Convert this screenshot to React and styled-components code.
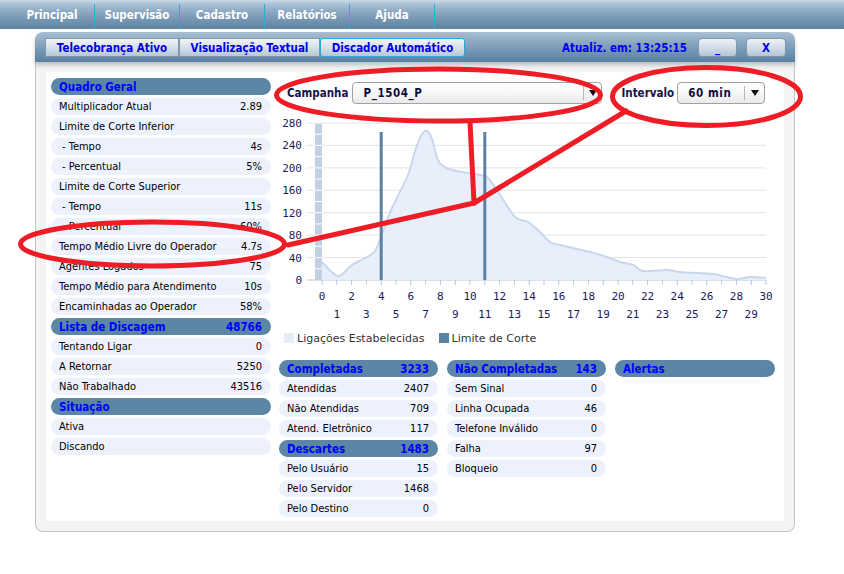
import React from "react";
import styled, { createGlobalStyle } from "styled-components";

const GlobalStyle = createGlobalStyle`
  html, body { margin: 0; padding: 0; background: #ffffff; }
  body {
    font-family: "DejaVu Sans Condensed", "Liberation Sans", sans-serif;
    font-size: 11px;
    color: #000;
  }
  #root { width: 844px; height: 574px; position: relative; overflow: hidden; }
`;

const SANS = `"DejaVu Sans Condensed", "Liberation Sans", sans-serif`;

const Page = styled.div`
  position: relative;
  width: 844px;
  height: 574px;
`;

const NavBar = styled.nav`
  display: flex;
  height: 29px;
  padding-left: 10px;
  background: linear-gradient(to bottom, #c9dae8 0%, #a9c1d5 14%, #86a5bf 45%, #6f92af 75%, #5d82a2 100%);
`;

const NavItem = styled.div`
  width: 85px;
  display: flex;
  align-items: center;
  justify-content: center;
  color: #ffffff;
  font-weight: bold;
  font-size: 11.5px;
  font-family: ${SANS};
  border-right: 1px solid #22b2d8;
  margin-top: 4px;
  padding-bottom: 4px;
  box-sizing: border-box;
`;

const Panel = styled.section`
  width: 760px;
  margin: 3px 0 0 35px;
`;

const PanelHeader = styled.header`
  position: relative;
  z-index: 1;
  height: 30px;
  box-sizing: border-box;
  display: flex;
  align-items: flex-start;
  padding: 6px 9px 0 10px;
  border-radius: 8px 8px 0 0;
  background: linear-gradient(to bottom, #a9bfd2 0%, #86a4be 40%, #6a8fad 75%, #5a80a0 100%);
  box-shadow: 0 3px 4px rgba(60, 70, 80, 0.3);
`;

const Tab = styled.div`
  height: 19px;
  box-sizing: border-box;
  padding: 0 11px;
  display: flex;
  align-items: center;
  justify-content: center;
  width: ${(p) => p.$w}px;
  border: 1px solid ${(p) => (p.$active ? "#2aa8e2" : "#8098ad")};
  background: linear-gradient(to bottom, #f0f4f7 0%, #d6e0e9 50%, #b7c7d5 100%);
  color: #0000dd;
  font-weight: bold;
  font-size: 11.5px;
  font-family: ${SANS};
  white-space: nowrap;
  border-radius: ${(p) => (p.$active ? "3px" : "0")};
`;

const Updated = styled.div`
  margin-left: auto;
  margin-right: 11px;
  height: 19px;
  display: flex;
  align-items: center;
  color: #0000ee;
  font-weight: bold;
  font-size: 11.5px;
  font-family: ${SANS};
`;

const WinButton = styled.div`
  width: ${(p) => p.$w}px;
  height: 19px;
  box-sizing: border-box;
  margin-left: ${(p) => p.$ml || 0}px;
  display: flex;
  align-items: center;
  justify-content: center;
  border-radius: 4px;
  border: 1px solid #7f98ae;
  background: linear-gradient(to bottom, #eef3f7 0%, #cfdbe6 55%, #b3c5d5 100%);
  color: #0000ee;
  font-weight: bold;
  font-size: 11.5px;
  font-family: ${SANS};
`;

const PanelBody = styled.div`
  background: #f3f3f3;
  border: 1px solid #c3c3c3;
  border-top: none;
  border-radius: 0 0 8px 8px;
  padding: 10px 10px 10px 10px;
`;

const Content = styled.div`
  background: #ffffff;
  height: 449px;
  box-sizing: border-box;
  padding: 6px 0 0 5px;
  display: flex;
  gap: 8px;
`;

const Column = styled.div`
  width: ${(p) => p.$w}px;
  display: flex;
  flex-direction: column;
  gap: 3px;
`;

const Row = styled.div`
  height: 17px;
  box-sizing: border-box;
  display: flex;
  align-items: center;
  justify-content: space-between;
  padding: 0 9px 0 ${(p) => (p.$indent ? 11 : 8)}px;
  border-radius: 9px;
  background: ${(p) => (p.$head ? "#5b86a5" : "#edf1fc")};
  color: ${(p) => (p.$head ? "#0000ff" : "#000000")};
  font-weight: ${(p) => (p.$head ? "bold" : "normal")};
  font-size: ${(p) => (p.$head ? "11.5px" : "11px")};
  font-family: ${SANS};
  white-space: nowrap;
`;

const RightArea = styled.div`
  width: 496px;
  padding-top: 4px;
  display: flex;
  flex-direction: column;
`;

const Controls = styled.div`
  display: flex;
  align-items: center;
  height: 22px;
  padding-left: 8px;
`;

const Label = styled.span`
  color: #14144a;
  font-weight: bold;
  font-size: 11.5px;
  font-family: ${SANS};
  margin-right: ${(p) => p.$mr}px;
  margin-left: ${(p) => p.$ml || 0}px;
`;

const Select = styled.div`
  width: ${(p) => p.$w}px;
  height: 22px;
  box-sizing: border-box;
  display: flex;
  align-items: stretch;
  border: 1px solid #a2a2a2;
  border-radius: 4px;
  background: linear-gradient(to bottom, #ffffff 0%, #f7f7f7 50%, #e9e9e9 100%);
`;

const SelectValue = styled.div`
  flex: 1;
  display: flex;
  align-items: center;
  padding-left: 10px;
  color: #0d0d3a;
  font-weight: bold;
  font-size: 11.5px;
  letter-spacing: 0.6px;
  font-family: ${SANS};
`;

const SelectArrow = styled.div`
  width: ${(p) => p.$w}px;
  display: flex;
  align-items: center;
  justify-content: center;
  border-left: 1px solid #b8b8b8;
  margin: 3px 0;
`;

const ChartSvg = styled.svg`
  display: block;
  width: 496px;
  height: 220px;
`;

const Legend = styled.div`
  display: flex;
  align-items: center;
  height: 14px;
  margin-top: 7px;
  padding-left: 5px;
  font-family: "DejaVu Sans", "Liberation Sans", sans-serif;
  font-size: 11px;
  color: #333333;
`;

const LegendSwatch = styled.span`
  width: 10px;
  height: 10px;
  background: ${(p) => p.$c};
  margin-right: 3px;
  margin-left: ${(p) => p.$ml || 0}px;
`;

const Grid = styled.div`
  display: flex;
  gap: 9px;
  margin-top: 15px;
`;

const Overlay = styled.svg`
  position: absolute;
  left: 0;
  top: 0;
  width: 844px;
  height: 574px;
  pointer-events: none;
  z-index: 10;
`;

function smoothPath(pts) {
  let d = `M${pts[0][0]},${pts[0][1]}`;
  for (let i = 0; i < pts.length - 1; i++) {
    const p0 = pts[i - 1] || pts[i];
    const p1 = pts[i];
    const p2 = pts[i + 1];
    const p3 = pts[i + 2] || p2;
    const c1x = p1[0] + (p2[0] - p0[0]) / 6;
    const c1y = p1[1] + (p2[1] - p0[1]) / 6;
    const c2x = p2[0] - (p3[0] - p1[0]) / 6;
    const c2y = p2[1] - (p3[1] - p1[1]) / 6;
    d += ` C${c1x.toFixed(1)},${c1y.toFixed(1)} ${c2x.toFixed(1)},${c2y.toFixed(1)} ${p2[0]},${p2[1]}`;
  }
  return d;
}

const OX = 279;
const OY = 104;
const X = (u) => 43 + 14.8 * u;
const Y = (v) => 176 - 0.5607 * v;

const pagePts = [
  [322, 262], [338, 276], [352, 265], [365, 258], [375, 251], [382, 234], [392, 208],
  [408, 175], [415, 151], [422, 134], [427, 131], [432, 139], [438, 160], [446, 168],
  [462, 172], [480, 175], [488, 178], [502, 198], [515, 217], [528, 222], [538, 230],
  [550, 242], [560, 245], [590, 252], [607, 257], [620, 262], [633, 265], [643, 271],
  [667, 270], [680, 272], [713, 274], [722, 276], [737, 279], [750, 277], [766, 278],
];
const pts = pagePts.map(([x, y]) => [x - OX, y - OY]);
const linePath = smoothPath(pts);
const areaPath = `${linePath} L${pts[pts.length - 1][0]},176 L${pts[0][0]},176 Z`;

const MONO = `"DejaVu Sans Mono", "Liberation Mono", monospace`;

function Chart() {
  const yVals = [0, 40, 80, 120, 160, 200, 240, 280];
  const units = Array.from({ length: 31 }, (_, i) => i);
  const barDividers = Array.from({ length: 14 }, (_, i) => Y(20 * (i + 1)));
  return (
    <ChartSvg viewBox="0 0 496 220">
      {yVals.map((v) => (
        <g key={v}>
          <line x1="28" x2="487" y1={Y(v)} y2={Y(v)} stroke={v === 0 ? "#b5c6da" : "#e4e4e4"} strokeWidth="1" />
          <text x="23" y={Y(v) + 4} textAnchor="end" fontFamily={MONO} fontSize="11" fill="#1a1a60">
            {v}
          </text>
        </g>
      ))}
      <rect x="36" y={Y(280)} width="7" height={176 - Y(280)} fill="#c2d1e1" />
      {barDividers.map((y, i) => (
        <line key={i} x1="36" x2="43" y1={y} y2={y} stroke="#ffffff" strokeWidth="1" />
      ))}
      <path d={areaPath} fill="#e9eefb" />
      <path d={linePath} fill="none" stroke="#c7d8eb" strokeWidth="2" />
      <line x1={X(4)} x2={X(4)} y1="28" y2="176" stroke="#5a81a2" strokeWidth="3" />
      <line x1={X(11)} x2={X(11)} y1="28" y2="176" stroke="#5a81a2" strokeWidth="3" />
      {units.map((u) => (
        <g key={u}>
          <line x1={X(u)} x2={X(u)} y1="176" y2="181" stroke="#b5c6da" strokeWidth="1" />
          <text
            x={X(u)}
            y={u % 2 === 0 ? 196 : 214}
            textAnchor="middle"
            fontFamily={MONO}
            fontSize="11"
            fill="#1a1a60"
          >
            {u}
          </text>
        </g>
      ))}
    </ChartSvg>
  );
}

function Arrow() {
  return (
    <svg width="8" height="6" viewBox="0 0 8 6">
      <path d="M0,0 L8,0 L4,6 Z" fill="#111" />
    </svg>
  );
}

const leftRows = [
  { head: true, l: "Quadro Geral" },
  { l: "Multiplicador Atual", v: "2.89" },
  { l: "Limite de Corte Inferior" },
  { l: "- Tempo", v: "4s", indent: true },
  { l: "- Percentual", v: "5%", indent: true },
  { l: "Limite de Corte Superior" },
  { l: "- Tempo", v: "11s", indent: true },
  { l: "- Percentual", v: "60%", indent: true },
  { l: "Tempo Médio Livre do Operador", v: "4.7s" },
  { l: "Agentes Logados", v: "75" },
  { l: "Tempo Médio para Atendimento", v: "10s" },
  { l: "Encaminhadas ao Operador", v: "58%" },
  { head: true, l: "Lista de Discagem", v: "48766" },
  { l: "Tentando Ligar", v: "0" },
  { l: "A Retornar", v: "5250" },
  { l: "Não Trabalhado", v: "43516" },
  { head: true, l: "Situação" },
  { l: "Ativa" },
  { l: "Discando" },
];

const colA = [
  { head: true, l: "Completadas", v: "3233" },
  { l: "Atendidas", v: "2407" },
  { l: "Não Atendidas", v: "709" },
  { l: "Atend. Eletrônico", v: "117" },
  { head: true, l: "Descartes", v: "1483" },
  { l: "Pelo Usuário", v: "15" },
  { l: "Pelo Servidor", v: "1468" },
  { l: "Pelo Destino", v: "0" },
];

const colB = [
  { head: true, l: "Não Completadas", v: "143" },
  { l: "Sem Sinal", v: "0" },
  { l: "Linha Ocupada", v: "46" },
  { l: "Telefone Inválido", v: "0" },
  { l: "Falha", v: "97" },
  { l: "Bloqueio", v: "0" },
];

const colC = [{ head: true, l: "Alertas" }];

function Rows({ items }) {
  return items.map((r, i) => (
    <Row key={i} $head={r.head} $indent={r.indent}>
      <span>{r.l}</span>
      {r.v !== undefined && <span>{r.v}</span>}
    </Row>
  ));
}

export default function App() {
  return (
    <Page>
      <GlobalStyle />
      <NavBar>
        {["Principal", "Supervisão", "Cadastro", "Relatórios", "Ajuda"].map((t) => (
          <NavItem key={t}>{t}</NavItem>
        ))}
      </NavBar>
      <Panel>
        <PanelHeader>
          <Tab $w={134}>Telecobrança Ativo</Tab>
          <Tab $w={141}>Visualização Textual</Tab>
          <Tab $w={145} $active>Discador Automático</Tab>
          <Updated>Atualiz. em: 13:25:15</Updated>
          <WinButton $w={39}>_</WinButton>
          <WinButton $w={40} $ml={9}>X</WinButton>
        </PanelHeader>
        <PanelBody>
          <Content>
            <Column $w={220}>
              <Rows items={leftRows} />
            </Column>
            <RightArea>
              <Controls>
                <Label $mr={4}>Campanha</Label>
                <Select $w={250}>
                  <SelectValue>P_1504_P</SelectValue>
                  <SelectArrow $w={17}><Arrow /></SelectArrow>
                </Select>
                <Label $ml={19} $mr={3}>Intervalo</Label>
                <Select $w={88}>
                  <SelectValue>60 min</SelectValue>
                  <SelectArrow $w={19}><Arrow /></SelectArrow>
                </Select>
              </Controls>
              <Chart />
              <Legend>
                <LegendSwatch $c="#e5ecfa" />
                <span>Ligações Estabelecidas</span>
                <LegendSwatch $c="#5b82a3" $ml={14} />
                <span>Limite de Corte</span>
              </Legend>
              <Grid>
                <Column $w={159}>
                  <Rows items={colA} />
                </Column>
                <Column $w={159}>
                  <Rows items={colB} />
                </Column>
                <Column $w={160}>
                  <Rows items={colC} />
                </Column>
              </Grid>
            </RightArea>
          </Content>
        </PanelBody>
      </Panel>
      <Overlay viewBox="0 0 844 574">
        <g fill="none" stroke="#ee1c25" strokeWidth="5">
          <ellipse cx="438.5" cy="95" rx="162" ry="26" />
          <ellipse cx="706.5" cy="96.5" rx="94" ry="29" />
          <ellipse cx="152.5" cy="244" rx="132" ry="22" />
          <path d="M470,122 L474,203" strokeLinecap="round" />
          <path d="M288,245 L474,203 L626,111" strokeLinejoin="round" strokeLinecap="round" />
        </g>
      </Overlay>
    </Page>
  );
}
